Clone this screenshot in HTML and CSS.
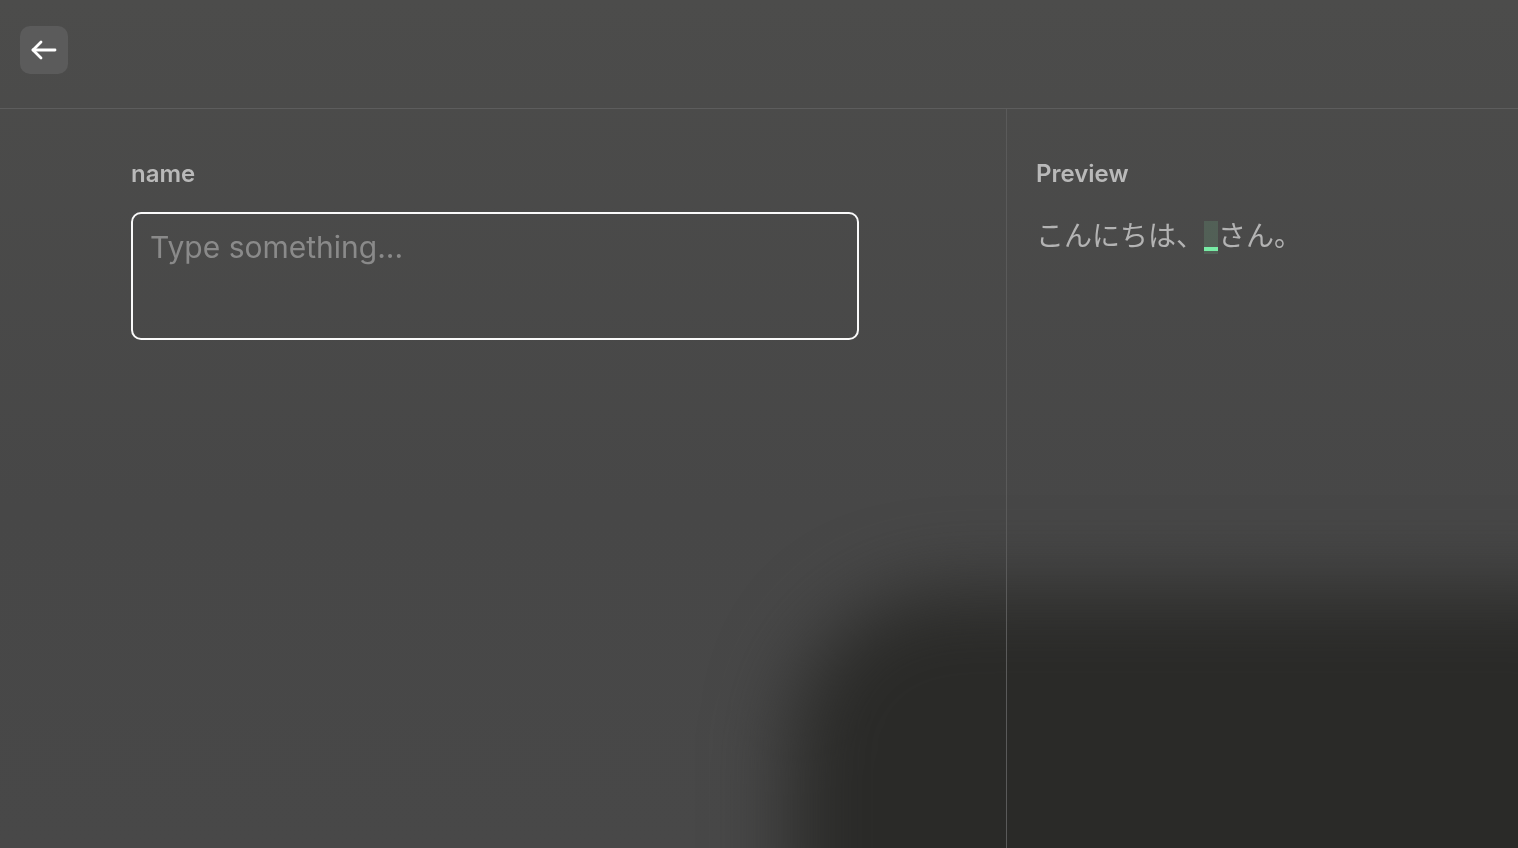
FILE: index.html
```html
<!DOCTYPE html>
<html lang="en">
<head>
    <meta charset="UTF-8">
    <meta name="viewport" content="width=device-width, initial-scale=1.0">
    <title>Template Editor</title>
    <link rel="stylesheet" href="styles.css">
</head>
<body>
    <header class="top-bar">
        <button class="back-button" aria-label="Back">
            <svg width="28" height="28" viewBox="0 0 28 28" fill="none" stroke="#fff" stroke-width="2.8" stroke-linecap="round" stroke-linejoin="round">
                <path d="M25 14H3"/>
                <path d="M11 6L3 14L11 22"/>
            </svg>
        </button>
    </header>

    <main class="editor">
        <!-- Input fields -->
        <section class="fields">
            <label class="field-label" for="nameInput">name</label>
            <textarea id="nameInput" class="field-input" placeholder="Type something..." autofocus></textarea>
        </section>

        <!-- Live preview -->
        <section class="preview">
            <h2 class="field-label">Preview</h2>
            <p class="preview-text">こんにちは、<span class="slot"></span>さん。</p>
        </section>
    </main>
</body>
</html>
```

FILE: styles.css
```css
html, body {
    height: 100%;
}
body {
    margin: 0;
    display: flex;
    flex-direction: column;
    font-family: Inter, "Noto Sans", sans-serif;
    color: #b9b9b9;
    background: linear-gradient(to bottom, #4c4c4b 0%, #474747 60%, #484848 100%);
    overflow: hidden;
}
/* blurred desktop shadow showing through the window */
body::before {
    content: "";
    position: fixed;
    left: 790px;
    top: 590px;
    right: -200px;
    bottom: -200px;
    background: #2a2a28;
    border-radius: 160px;
    filter: blur(40px);
    z-index: -1;
}
.top-bar {
    height: 82px;
    padding: 26px 20px 0;
    border-bottom: 1px solid #5d5d5d;
    flex-shrink: 0;
}
.back-button {
    width: 48px;
    height: 48px;
    border: none;
    border-radius: 10px;
    background: #5b5b5b;
    display: flex;
    align-items: center;
    justify-content: center;
    padding: 0;
    cursor: pointer;
}
.editor {
    flex: 1;
    display: flex;
}
.fields {
    width: 1007px;
    box-sizing: border-box;
    padding: 50px 0 0 131px;
    border-right: 1px solid #5a5a5a;
    display: flex;
    flex-direction: column;
}
.field-label {
    margin: 0;
    font-size: 24px;
    font-weight: 600;
    line-height: 29px;
    color: #b9b9b9;
}
.field-input {
    margin-top: 24px;
    width: 728px;
    height: 128px;
    box-sizing: border-box;
    padding: 15px 17px;
    border: 2px solid #fafafa;
    border-radius: 10px;
    outline: none;
    resize: none;
    background: transparent;
    color: #d0d0d0;
    caret-color: #6e6e6e;
    font-family: Inter, "Noto Sans", sans-serif;
    font-size: 30px;
    line-height: 36px;
}
.field-input::placeholder {
    color: #8a8a8a;
}
.preview {
    flex: 1;
    padding: 50px 0 0 29px;
}
.preview-text {
    margin: 28px 0 0;
    font-family: Inter, "Noto Sans CJK JP", sans-serif;
    font-size: 28px;
    line-height: 40px;
    color: #b3b3b3;
}
.slot {
    display: inline-block;
    width: 14px;
    height: 33px;
    vertical-align: -8px;
    background:
        linear-gradient(to bottom, transparent 26px, #78eca6 26px, #78eca6 30px, transparent 30px),
        rgba(120, 200, 150, 0.18);
}
```
